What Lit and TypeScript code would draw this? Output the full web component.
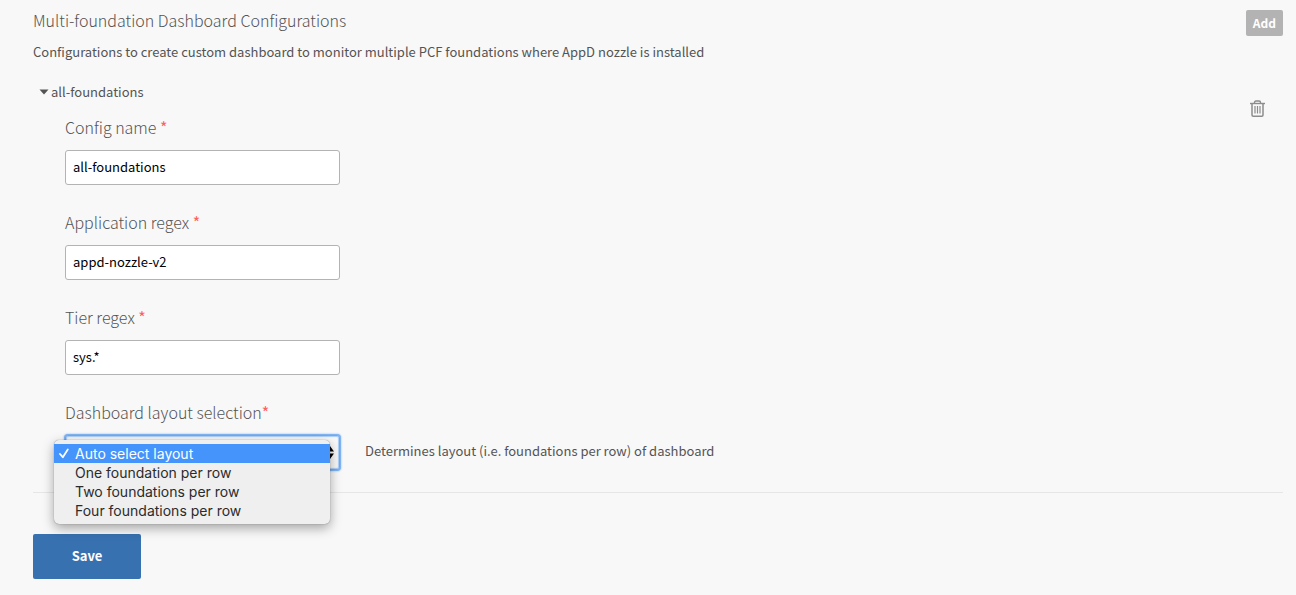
import { LitElement, html, css } from "lit";
import { customElement, state } from "lit/decorators.js";

interface TextField {
  id: string;
  label: string;
  value: string;
}

const FIELDS: TextField[] = [
  { id: "config-name", label: "Config name", value: "all-foundations" },
  { id: "application-regex", label: "Application regex", value: "appd-nozzle-v2" },
  { id: "tier-regex", label: "Tier regex", value: "sys.*" },
];

const LAYOUTS = [
  "Auto select layout",
  "One foundation per row",
  "Two foundations per row",
  "Four foundations per row",
];

@customElement("app-root")
export class AppRoot extends LitElement {
  @state() private layout = 0;
  @state() private menuOpen = true;
  @state() private expanded = true;

  static styles = css`
    :host {
      display: block;
      box-sizing: border-box;
      min-height: 100vh;
      padding: 10px 13px 16px 33px;
      background: #f8f8f8;
      color: #545454;
      font-family: "Noto Sans CJK JP", "Noto Sans", sans-serif;
      font-size: 13px;
      line-height: 20px;
    }
    * {
      box-sizing: border-box;
    }
    h2,
    p {
      margin: 0;
    }
    button,
    input,
    select {
      font: inherit;
    }
    .header {
      display: flex;
      justify-content: space-between;
      align-items: flex-start;
    }
    .title {
      font-size: 16px;
      font-weight: 300;
      line-height: 20px;
    }
    .description {
      margin-top: 12px;
    }
    .add {
      padding: 3px 7px;
      border: 0;
      border-radius: 2px;
      background: #b3b3b3;
      color: #fff;
      font-size: 12px;
      font-weight: 700;
    }
    .config {
      display: flex;
      justify-content: space-between;
      align-items: flex-start;
      margin-top: 20px;
      padding-bottom: 22px;
      border-bottom: 1px solid #e6e6e6;
    }
    .toggle {
      display: flex;
      align-items: center;
      gap: 2px;
      padding: 0 0 0 6px;
      border: 0;
      background: none;
      color: inherit;
    }
    .remove {
      display: flex;
      margin: 18px 18px 0 0;
      padding: 0;
      border: 0;
      background: none;
      color: #8c8c8c;
    }
    .fields {
      display: grid;
      gap: 25px;
      padding: 13px 0 0 32px;
    }
    .label {
      display: block;
      margin-bottom: 11px;
      font-size: 16px;
      font-weight: 300;
      line-height: 24px;
    }
    .required {
      color: #ff6058;
      font-weight: 400;
    }
    .control {
      display: block;
      width: 275px;
      height: 35px;
      padding: 0 7px 3px;
      border: 1px solid #b3b3b3;
      border-radius: 3px;
      background: #fff;
      color: #000;
      outline: none;
    }
    .row {
      display: flex;
      align-items: center;
      gap: 25px;
    }
    .picker {
      position: relative;
    }
    .dropdown {
      appearance: none;
      border-color: #6fabf3;
      background: #f8f8f8;
      box-shadow: 0 0 0 1px #7fb4f2, 0 0 2px 1px #7fb4f2, inset 0 0 1px 1px #a9ccf6;
    }
    .arrows {
      position: absolute;
      right: 6px;
      top: 11px;
      pointer-events: none;
    }
    .menu {
      position: absolute;
      z-index: 1;
      top: 5px;
      left: -11px;
      width: 276px;
      margin: 0;
      padding: 4px 0;
      border-radius: 5px;
      background: #efefef;
      box-shadow: 0 0 1px rgba(0, 0, 0, 0.5), 0 4px 12px rgba(0, 0, 0, 0.35);
      color: #2b2b2b;
      font-family: Inter, "Liberation Sans", sans-serif;
      font-size: 14px;
      line-height: 19px;
      list-style: none;
    }
    .option {
      display: grid;
      grid-template-columns: 16px 1fr;
      align-items: center;
      padding-left: 5px;
      cursor: default;
    }
    .option.selected {
      background: #4494fb;
      color: #fff;
    }
    .name {
      grid-column: 2;
    }
    .hint {
      padding-bottom: 4px;
    }
    .save {
      min-width: 108px;
      height: 45px;
      margin-top: 41px;
      padding-bottom: 3px;
      border: 0;
      border-radius: 2px;
      background: #3871b0;
      color: #fff;
      font-weight: 700;
    }
  `;

  private choose(index: number) {
    this.layout = index;
    this.menuOpen = false;
  }

  private openMenu(event: Event) {
    event.preventDefault();
    this.menuOpen = !this.menuOpen;
  }

  private renderMenu() {
    return html`<ul class="menu" role="listbox" aria-label="Dashboard layout">
      ${LAYOUTS.map(
        (name, i) => html`<li
          class="option ${i === this.layout ? "selected" : ""}"
          role="option"
          aria-selected=${i === this.layout}
          @click=${() => this.choose(i)}
        >
          ${i === this.layout
            ? html`<svg width="10" height="11" viewBox="0 0 10 11" aria-hidden="true">
                <path d="M1 6 L3.8 9.2 L8.8 1.4" fill="none" stroke="currentColor" stroke-width="1.8" stroke-linecap="round" stroke-linejoin="round" />
              </svg>`
            : ""}
          <span class="name">${name}</span>
        </li>`
      )}
    </ul>`;
  }

  private renderFields() {
    return html`<div class="fields">
      ${FIELDS.map(
        (f) => html`<div>
          <label class="label" for=${f.id}>${f.label} <span class="required">*</span></label>
          <input class="control" id=${f.id} type="text" .value=${f.value} required />
        </div>`
      )}
      <div>
        <label class="label" for="layout">Dashboard layout selection<span class="required">*</span></label>
        <div class="row">
          <div class="picker">
            <select class="control dropdown" id="layout" required @mousedown=${this.openMenu}>
              ${LAYOUTS.map((name, i) => html`<option ?selected=${i === this.layout}>${name}</option>`)}
            </select>
            <svg class="arrows" width="8" height="13" viewBox="0 0 8 13" aria-hidden="true">
              <path d="M0 5.5 L4 0 L8 5.5 Z M0 7.5 L4 13 L8 7.5 Z" fill="#000" />
            </svg>
            ${this.menuOpen ? this.renderMenu() : ""}
          </div>
          <span class="hint">Determines layout (i.e. foundations per row) of dashboard</span>
        </div>
      </div>
    </div>`;
  }

  render() {
    return html`
      <div class="header">
        <div>
          <h2 class="title">Multi-foundation Dashboard Configurations</h2>
          <p class="description">
            Configurations to create custom dashboard to monitor multiple PCF foundations where AppD nozzle is installed
          </p>
        </div>
        <button class="add" type="button">Add</button>
      </div>
      <div class="config">
        <div>
          <button
            class="toggle"
            type="button"
            aria-expanded=${this.expanded}
            @click=${() => (this.expanded = !this.expanded)}
          >
            <svg width="10" height="6" viewBox="0 0 10 6" aria-hidden="true">
              <path d="M0.5 0.5 H9.5 L5 5.5 Z" fill="currentColor" />
            </svg>
            all-foundations
          </button>
          ${this.expanded ? this.renderFields() : ""}
        </div>
        <button class="remove" type="button" aria-label="Delete configuration">
          <svg width="15" height="17" viewBox="0 0 15 17" fill="none" stroke="currentColor" aria-hidden="true">
            <path d="M0 3.5 H15" stroke-width="1.4" />
            <path d="M4.5 3.5 V2.5 Q4.5 1 6 1 H9 Q10.5 1 10.5 2.5 V3.5" stroke-width="1.4" />
            <path d="M2 3.5 V15 Q2 16.2 3.2 16.2 H11.8 Q13 16.2 13 15 V3.5" stroke-width="1.5" />
            <path d="M5 6 V13.5 M7.5 6 V13.5 M10 6 V13.5" stroke-width="1.2" />
          </svg>
        </button>
      </div>
      <button class="save" type="submit">Save</button>
    `;
  }
}
